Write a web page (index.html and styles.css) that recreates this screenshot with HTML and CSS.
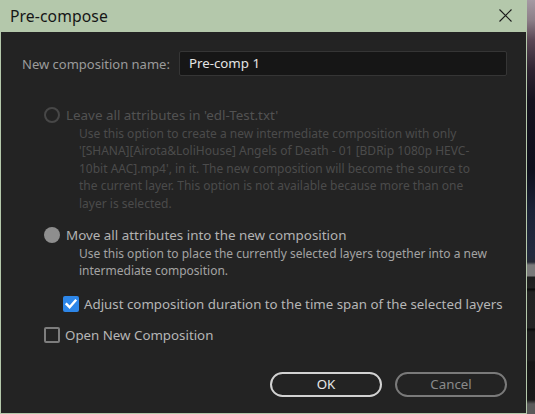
FILE: index.html
```html
<!DOCTYPE html>
<html>
<head>
<meta charset="utf-8">
<link rel="stylesheet" href="styles.css">
</head>
<body>
<div class="screen">
  <div class="dialog">
    <div class="titlebar">
      <span class="title">Pre-compose</span>
      <svg class="close" width="13" height="13" viewBox="0 0 13 13"><path d="M0.5 0.5 L12.5 12.5 M12.5 0.5 L0.5 12.5" stroke="#1a1a1a" stroke-width="1.1" fill="none"/></svg>
    </div>
    <div class="content">
      <div class="name-row">
        <span class="name-label">New composition name:</span>
        <div class="input">Pre-comp 1</div>
      </div>

      <div class="option disabled first">
        <div class="opt-head"><span class="radio"></span><span class="opt-label">Leave all attributes in 'edl-Test.txt'</span></div>
        <div class="desc">Use this option to create a new intermediate composition with only '[SHANA][Airota&amp;LoliHouse] Angels of Death - 01 [BDRip 1080p HEVC-10bit AAC].mp4', in it. The new composition will become the source to the current layer. This option is not available because more than one layer is selected.</div>
      </div>

      <div class="option second">
        <div class="opt-head"><span class="radio filled"></span><span class="opt-label">Move all attributes into the new composition</span></div>
        <div class="desc">Use this option to place the currently selected layers together into a new intermediate composition.</div>
      </div>

      <div class="check-row adjust">
        <span class="box checked"><svg width="16" height="16" viewBox="0 0 16 16"><path d="M3.6 8.2 L6.6 11.2 L12.4 4.6" stroke="#fff" stroke-width="2.4" fill="none" stroke-linecap="square"/></svg></span>
        <span class="check-label">Adjust composition duration to the time span of the selected layers</span>
      </div>

      <div class="check-row open">
        <span class="box"></span>
        <span class="check-label">Open New Composition</span>
      </div>

      <div class="buttons">
        <div class="btn ok">OK</div>
        <div class="btn cancel">Cancel</div>
      </div>
    </div>
  </div>
  <div class="strip"></div>
</div>
</body>
</html>
```

FILE: styles.css
```css
html, body {
  margin: 0;
  padding: 0;
  background: #222;
}
.screen {
  display: flex;
  width: 535px;
  height: 414px;
  overflow: hidden;
  font-family: "Noto Sans", "Open Sans", sans-serif;
}
.dialog {
  width: 527px;
  height: 414px;
  box-sizing: border-box;
  border: 1px solid #b4c8ab;
  border-top: none;
  background: #232323;
  display: flex;
  flex-direction: column;
  flex: none;
}
.strip {
  flex: 1;
  background: linear-gradient(to bottom,
    #a59aa3 0px, #8d7f88 20px, #5a4654 40px, #2e2230 70px, #15121e 100px,
    #0e0f1c 170px, #1b2236 210px, #232a3e 255px, #262a36 262px,
    #7a7a7a 265px, #7a7a7a 276px, #1d1d1d 277px, #222 288px, #080808 289px,
    #222 292px, #242424 328px, #0a0a0a 329px, #1e1e1e 332px, #1e1e1e 360px,
    #161616 362px, #1a1a1a 400px, #5a5a5a 404px, #5a5a5a 414px);
}
.titlebar {
  height: 32px;
  margin: 0 -1px;
  background: #b4c8ab;
  display: flex;
  align-items: center;
  justify-content: space-between;
  padding: 0 15px 0 10px;
  flex: none;
}
.title {
  font-family: "Noto Sans", sans-serif;
  font-size: 15.7px;
  color: #161616;
  letter-spacing: 0.1px;
}
.close {
  display: block;
  margin-top: -1px;
}
.content {
  flex: 1;
  display: flex;
  flex-direction: column;
  padding: 19px 19px 0 21px;
}
.name-row {
  display: flex;
  align-items: center;
  gap: 9px;
  height: 25px;
}
.name-label {
  font-size: 13px;
  color: #9b9b9b;
}
.input {
  flex: 1;
  height: 25px;
  box-sizing: border-box;
  background: #161616;
  border: 1px solid #353535;
  border-radius: 2px;
  color: #e4e4e4;
  font-size: 13.3px;
  line-height: 23px;
  padding-left: 9px;
}
.option {
  padding-left: 22px;
}
.option.first { margin-top: 29px; }
.option.second { margin-top: 13px; }
.opt-head {
  display: flex;
  align-items: center;
  height: 20px;
  gap: 6px;
}
.radio {
  width: 16px;
  height: 16px;
  box-sizing: border-box;
  border-radius: 50%;
  border: 2px solid #474747;
  flex: none;
}
.radio.filled {
  border: none;
  background: #8e8e8e;
}
.opt-label {
  font-size: 13.4px;
  color: #b2b2b2;
}
.desc {
  padding-left: 35px;
  padding-right: 16px;
  font-size: 12px;
  line-height: 17.4px;
  color: #a3a3a3;
}
.disabled .opt-label { color: #525252; }
.disabled .desc { color: #4b4b4b; }

.check-row {
  display: flex;
  align-items: center;
  height: 20px;
  gap: 5px;
}
.check-row.adjust { margin-top: 14px; padding-left: 41px; }
.check-row.open { margin-top: 11px; padding-left: 22px; }
.box {
  width: 16px;
  height: 16px;
  box-sizing: border-box;
  border: 2px solid #7d7d7d;
  border-radius: 2px;
  flex: none;
  display: flex;
}
.box.checked {
  border: none;
  background: #2d86e8;
}
.check-label {
  font-size: 13.3px;
  color: #b6b6b6;
}
.buttons {
  display: flex;
  justify-content: flex-end;
  gap: 13px;
  margin-top: 27px;
}
.btn {
  width: 112px;
  height: 25px;
  box-sizing: border-box;
  border-radius: 13px;
  border: 2px solid #d2d2d2;
  font-size: 13.3px;
  text-align: center;
  line-height: 21px;
  color: #e8e8e8;
}
.btn.cancel {
  border-color: #7a7a7a;
  color: #8a8a8a;
}
```
